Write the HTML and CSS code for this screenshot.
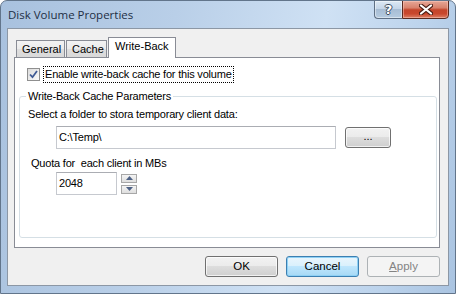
FILE: index.html
```html
<!DOCTYPE html>
<html>
<head>
<meta charset="utf-8">
<link rel="stylesheet" href="styles.css">
</head>
<body>
<div class="window">
  <div class="titlebar">
    <span class="title">Disk Volume Properties</span>
    <div class="caption-btns">
      <div class="cap help"><span class="qmark">?</span></div>
      <div class="cap close">
        <svg width="14" height="11" viewBox="0 0 14 11">
          <path d="M2 1.5 L12 9.5 M12 1.5 L2 9.5" stroke="#4a1d14" stroke-width="4.2" stroke-linecap="round"/>
          <path d="M2 1.5 L12 9.5 M12 1.5 L2 9.5" stroke="#ffffff" stroke-width="2.2" stroke-linecap="round"/>
        </svg>
      </div>
    </div>
  </div>
  <div class="client">
    <div class="tabs">
      <div class="tab t-general">General</div>
      <div class="tab t-cache">Cache</div>
      <div class="tab active">Write-Back</div>
    </div>
    <div class="panel">
      <div class="check-row">
        <span class="checkbox">
          <svg width="9" height="9" viewBox="0 0 9 9"><path d="M1 4.5 L3.5 7.2 L8 1" fill="none" stroke="#3f5a94" stroke-width="1.8"/></svg>
        </span>
        <span class="focus">Enable write-back cache for this volume</span>
      </div>
      <fieldset class="group">
        <legend>Write-Back Cache Parameters</legend>
        <div class="lbl l1">Select a folder to stora temporary client data:</div>
        <div class="row path-row">
          <div class="textbox path">C:\Temp\</div>
          <div class="btn browse">...</div>
        </div>
        <div class="lbl l2">Quota for&nbsp; each client in MBs</div>
        <div class="row num-row">
          <div class="textbox num">2048</div>
          <div class="spin">
            <div class="sp"><svg width="7" height="4" viewBox="0 0 7 4"><path d="M0 4 L3.5 0 L7 4 Z" fill="#4d6185"/></svg></div>
            <div class="sp"><svg width="7" height="4" viewBox="0 0 7 4"><path d="M0 0 L3.5 4 L7 0 Z" fill="#4d6185"/></svg></div>
          </div>
        </div>
      </fieldset>
    </div>
    <div class="actions">
      <div class="btn action">OK</div>
      <div class="btn action default">Cancel</div>
      <div class="btn action disabled"><u>A</u>pply</div>
    </div>
  </div>
</div>
</body>
</html>
```

FILE: styles.css
```css
html, body {
  margin: 0;
  padding: 0;
  background: #ffffff;
}

.window {
  width: 456px;
  height: 294px;
  box-sizing: border-box;
  border: 1px solid #62758b;
  border-radius: 7px 7px 0 0;
  background: linear-gradient(100deg, #a8c1de 0%, #b9cfe8 35%, #cfe1f4 65%, #bcd3ec 85%, #aac4e1 100%);
  display: flex;
  flex-direction: column;
  padding: 0 6px 7px 6px;
  font-family: "Liberation Sans", Arial, sans-serif;
  font-size: 11px;
  letter-spacing: -0.2px;
  color: #000;
  overflow: hidden;
}

.titlebar {
  height: 27px;
  display: flex;
  align-items: flex-start;
}

.title {
  font-family: "Open Sans", "Noto Sans", sans-serif;
  font-size: 11.5px;
  letter-spacing: 0;
  color: #1e2f45;
  margin-left: 1px;
  margin-top: 6px;
  line-height: 16px;
}

.caption-btns {
  margin-left: auto;
  display: flex;
  margin-top: -1px;
  margin-right: 0;
}

.cap {
  height: 19px;
  box-sizing: border-box;
  display: flex;
  align-items: center;
  justify-content: center;
}

.help {
  width: 28px;
  border: 1px solid #5e6f84;
  border-right: none;
  border-radius: 0 0 0 4px;
  background: linear-gradient(#dce8f4 0%, #c4d5e8 45%, #a7bdd4 50%, #b6cbe0 100%);
  box-shadow: inset 0 0 0 1px rgba(255,255,255,0.45);
}

.qmark {
  font-family: "DejaVu Sans", sans-serif;
  font-weight: bold;
  font-size: 13px;
  color: #ffffff;
  line-height: 13px;
  text-shadow: 1px 0 0 #3c4b5e, -1px 0 0 #3c4b5e, 0 1px 0 #3c4b5e, 0 -1px 0 #3c4b5e;
}

.close {
  width: 47px;
  border: 1px solid #5a2a20;
  border-radius: 0 0 4px 0;
  background: linear-gradient(#e6a797 0%, #d8826d 40%, #c4452b 52%, #c9472d 75%, #dc8066 100%);
  box-shadow: inset 0 0 0 1px rgba(255,210,200,0.45);
}

.client {
  flex: 1;
  border: 1px solid #8c97a5;
  background: #f0f0f0;
  display: flex;
  flex-direction: column;
  padding: 8px 8px 8px 6px;
  min-height: 0;
}

.tabs {
  height: 20px;
  display: flex;
  align-items: flex-end;
  padding-left: 2px;
}

.tab {
  box-sizing: border-box;
  height: 17px;
  border: 1px solid #898c95;
  border-bottom: none;
  background: linear-gradient(#f3f3f3 0%, #ebebeb 50%, #dedede 51%, #d9d9d9 100%);
  padding: 0 5px;
  line-height: 16px;
  margin-right: 1px;
  white-space: nowrap;
  font-size: 11px;
  letter-spacing: 0;
  color: #000;
}

.t-general { width: 49px; }
.t-cache { width: 41px; }

.tab.active {
  width: 68px;
  height: 21px;
  margin-bottom: -1px;
  background: #ffffff;
  z-index: 2;
  line-height: 17px;
  padding-left: 6px;
}

.panel {
  flex: 1;
  background: #ffffff;
  border: 1px solid #898c95;
  display: flex;
  flex-direction: column;
  min-height: 0;
}

.check-row {
  display: flex;
  align-items: center;
  margin: 8px 0 0 12px;
  height: 17px;
}

.checkbox {
  width: 13px;
  height: 13px;
  box-sizing: border-box;
  border: 1px solid #8f8f8f;
  background: linear-gradient(135deg, #dcdcdc, #fafafa);
  display: flex;
  align-items: center;
  justify-content: center;
  margin-right: 3px;
}

.focus {
  outline: 1px dotted #000;
  outline-offset: 0;
  padding: 0 1px;
  line-height: 15px;
  margin-left: 1px;
}

.group {
  flex: 1;
  margin: 7px 2px 9px 4px;
  padding: 0;
  border: 1px solid #d5dfe5;
  border-radius: 3px;
  min-width: 0;
  min-height: 0;
}

.group legend {
  margin-left: 6px;
  padding: 0 2px;
  line-height: 13px;
}

.lbl {
  line-height: 13px;
}

.l1 {
  margin: 5px 0 0 8px;
}

.row {
  display: flex;
  align-items: center;
}

.path-row {
  margin: 5px 0 0 36px;
}

.textbox {
  box-sizing: border-box;
  height: 23px;
  border: 1px solid #c6c9cf;
  border-top-color: #abadb3;
  background: #ffffff;
  line-height: 21px;
  padding-left: 2px;
}

.path {
  width: 280px;
}

.btn {
  box-sizing: border-box;
  border: 1px solid #707070;
  border-radius: 3px;
  background: linear-gradient(#f2f2f2 0%, #ebebeb 49%, #dddddd 50%, #cfcfcf 100%);
  box-shadow: inset 0 0 0 1px rgba(255,255,255,0.7);
  text-align: center;
  letter-spacing: 0;
}

.browse {
  width: 46px;
  height: 21px;
  line-height: 17px;
  margin-left: 9px;
  font-size: 11px;
}

.l2 {
  margin: 8px 0 0 11px;
}

.num-row {
  margin: 2px 0 0 36px;
}

.num {
  width: 61px;
}

.spin {
  display: flex;
  flex-direction: column;
  gap: 2px;
  margin-left: 4px;
}

.sp {
  box-sizing: border-box;
  width: 16px;
  height: 9px;
  border: 1px solid #a7a7a7;
  background: linear-gradient(#f4f4f4, #dedede);
  display: flex;
  align-items: center;
  justify-content: center;
}

.actions {
  display: flex;
  justify-content: flex-end;
  gap: 8px;
  margin-top: 8px;
  padding-right: 0;
}

.action {
  width: 73px;
  height: 21px;
  line-height: 19px;
  font-size: 11.5px;
}

.default {
  border-color: #3c7fb1;
  background: linear-gradient(#eaf6fd 0%, #d9f0fc 49%, #bee6fd 50%, #a7d9f5 100%);
  box-shadow: inset 0 0 0 1px #8fd1f5;
}

.disabled {
  border-color: #adb2b5;
  background: #f4f4f4;
  box-shadow: none;
  color: #838383;
}
```
